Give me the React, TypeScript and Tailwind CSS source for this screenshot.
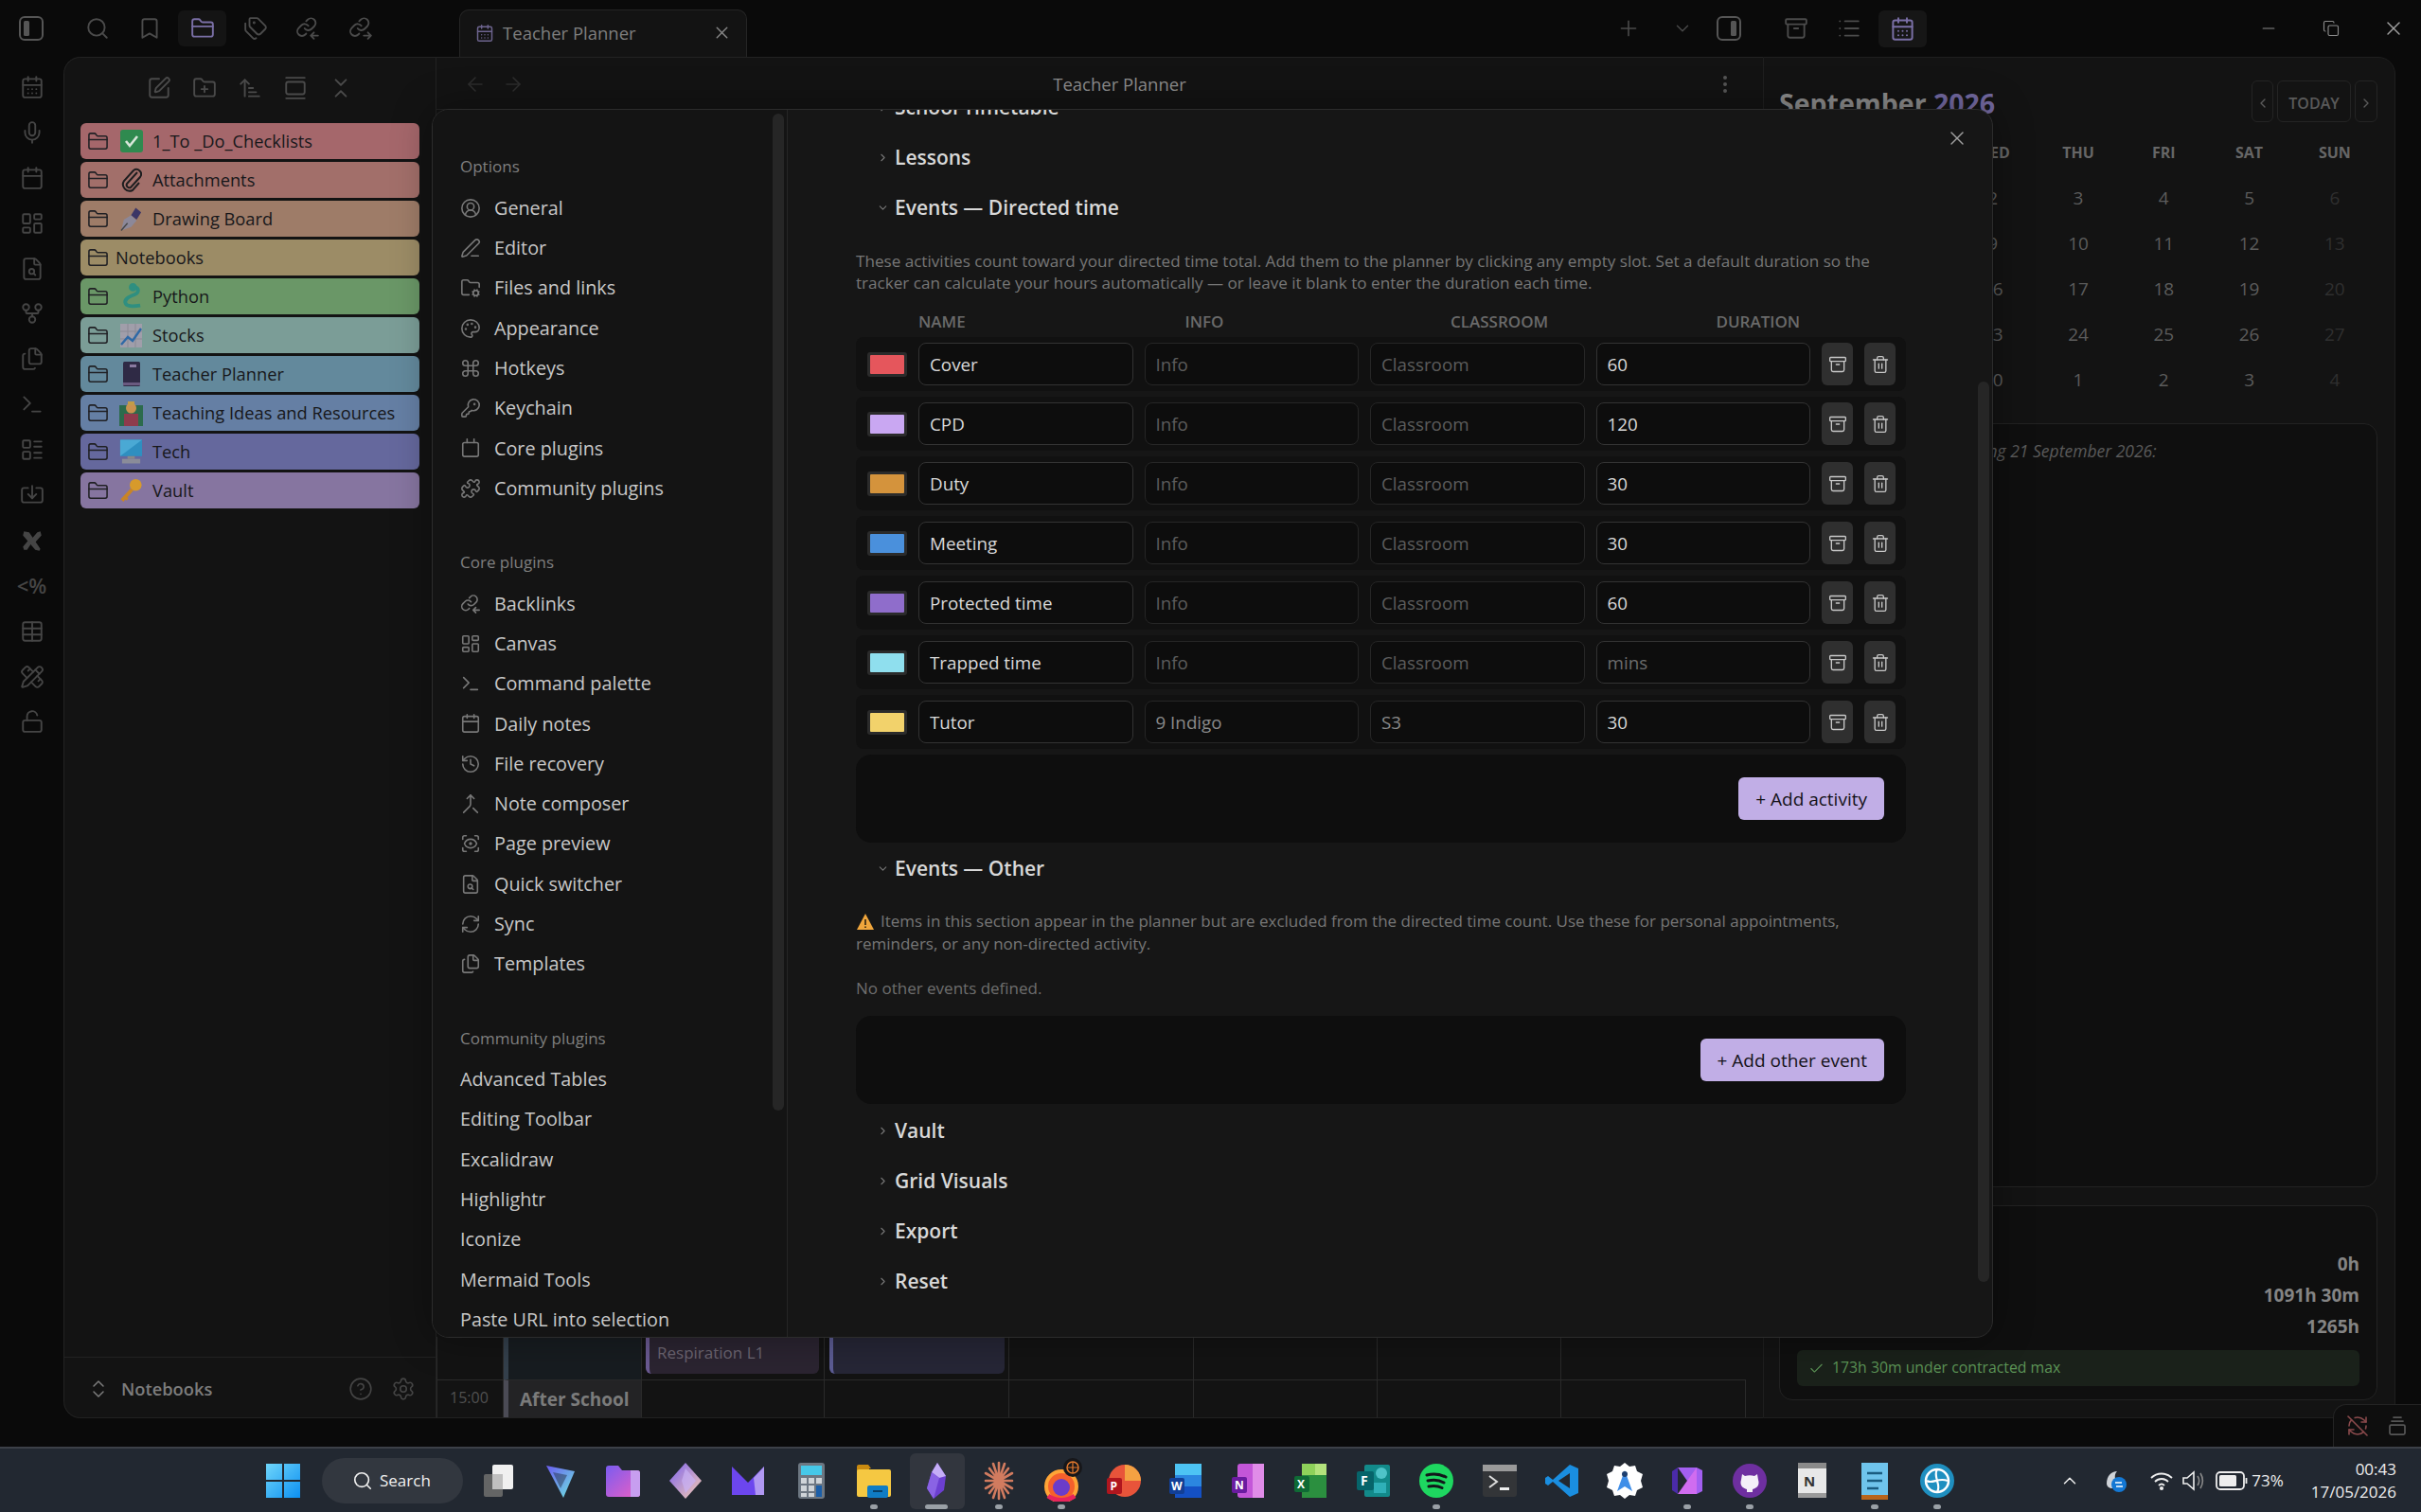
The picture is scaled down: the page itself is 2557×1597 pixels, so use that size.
import React from "react";
import {
  Search, Bookmark, FolderClosed, Tags, X, Plus, ChevronDown, Archive, List, CalendarDays, Minus, Copy,
  SquarePen, FolderPlus, ArrowUpNarrowWide, GalleryVertical, ChevronsDownUp, Mic, Calendar, LayoutDashboard,
  FileSearch, GitFork, Files, Terminal, LayoutList, Import, Table, PencilRuler, LockOpen, ArrowLeft, ArrowRight,
  EllipsisVertical, ChevronRight, CircleUserRound, PenLine, FolderCog, Palette, Command, KeyRound, Puzzle, History,
  Merge, ScanEye, RefreshCw, RefreshCwOff, Trash2, ChevronsUpDown, CircleHelp, Settings, Check, ChevronLeft, ChevronUp,
} from "lucide-react";

const sw = 1.75;

function LinkIn({ size = 26, out = false }: { size?: number; out?: boolean }) {
  return (
    <svg width={size} height={size} viewBox="0 0 24 24" fill="none" stroke="currentColor" strokeWidth={sw} strokeLinecap="round" strokeLinejoin="round">
      <path d="M9 12a4.5 4.5 0 0 0 6.8.5l2.6-2.6a4.5 4.5 0 0 0-6.4-6.4l-1.5 1.5" />
      <path d="M12.6 9.5a4.5 4.5 0 0 0-6.8-.5l-2.6 2.6a4.5 4.5 0 0 0 6.4 6.4l.9-.9" />
      {out ? <path d="M15 19h7M19 16l3 3-3 3" /> : <path d="M22 19h-7M18 16l-3 3 3 3" />}
    </svg>
  );
}
function PanelToggle({ right = false }: { right?: boolean }) {
  return (
    <svg width="30" height="30" viewBox="0 0 30 30" fill="none">
      <rect x="3" y="3" width="24" height="24" rx="5" stroke="currentColor" strokeWidth="2" />
      <rect x={right ? 17 : 7} y="7" width="6" height="16" rx="1.5" fill="currentColor" />
    </svg>
  );
}
function CorePlug({ size = 22 }: { size?: number }) {
  return (
    <svg width={size} height={size} viewBox="0 0 24 24" fill="none" stroke="currentColor" strokeWidth={sw} strokeLinecap="round">
      <rect x="3" y="6" width="18" height="16" rx="2" />
      <path d="M8 2v4M16 2v4" />
    </svg>
  );
}
function ExcaliIcon() {
  return (
    <svg width="26" height="26" viewBox="0 0 24 24" fill="currentColor">
      <path d="M4 3l5 1 11 16-1 2-4-1L3 7z" />
      <path d="M20 3l1 4-8 9-3-4 7-8zM4 21l-1-3 5-6 3 3-4 6z" />
    </svg>
  );
}
function StackIcon() {
  return (
    <svg width="24" height="24" viewBox="0 0 24 24" fill="none" stroke="currentColor" strokeWidth="1.75" strokeLinecap="round">
      <path d="M8 3h8M6 7h12" />
      <rect x="4" y="11" width="16" height="10" rx="1.5" />
    </svg>
  );
}

/* emoji drawings for the folder rows */
const emo: Record<string, React.ReactNode> = {
  check: (<svg width="24" height="26" viewBox="0 0 24 26"><rect x="0" y="1" width="24" height="24" rx="3" fill="#2f8a4f" /><path d="M6 13l4 5 8-10" fill="none" stroke="#d8e6da" strokeWidth="2.6" /></svg>),
  clip: (<svg width="22" height="26" viewBox="0 0 22 26" fill="none" stroke="#1d1d1f" strokeWidth="2"><path d="M17 5L6 17a3 3 0 0 0 4 4L20 10a5 5 0 0 0-7-7L3 14a7 7 0 0 0 9 10l7-8" /></svg>),
  pen: (<svg width="26" height="28" viewBox="0 0 26 28"><path d="M2 27l3-12 8-5 6 6-6 7z" fill="#8c8899" /><path d="M13 10l5-8 6 5-5 8z" fill="#3b3566" /><path d="M2 27l7-8" stroke="#444" strokeWidth="1.4" /></svg>),
  snake: (<svg width="26" height="28" viewBox="0 0 26 28" fill="none" stroke="#2f8f80" strokeWidth="4"><path d="M16 4c6 0 6 6 1 8-8 3-12 6-10 10s10 3 16 2" /><circle cx="15" cy="4" r="2.5" fill="#2f8f80" /></svg>),
  chart: (<svg width="25" height="27" viewBox="0 0 25 27"><rect x="1" y="1" width="23" height="25" fill="#a09eaa" /><path d="M1 9h23M1 17h23M9 1v25M17 1v25" stroke="#8a8994" strokeWidth="1" /><path d="M2 23l7-8 5 4 9-13" fill="none" stroke="#2f69a6" strokeWidth="2.4" /></svg>),
  book: (<svg width="22" height="28" viewBox="0 0 22 28"><rect x="2" y="1" width="18" height="26" rx="1.5" fill="#2f2a45" /><rect x="2" y="23" width="18" height="3" fill="#6a5a80" /><rect x="9" y="4" width="7" height="3" fill="#8a7aa0" /></svg>),
  teach: (<svg width="25" height="28" viewBox="0 0 25 28"><rect x="0" y="6" width="25" height="22" fill="#2c6b4c" /><circle cx="12.5" cy="9" r="5.5" fill="#c9924f" /><rect x="5" y="15" width="15" height="13" fill="#8e3b4c" /><rect x="9" y="2" width="7" height="4" fill="#c29c48" /></svg>),
  tech: (<svg width="26" height="28" viewBox="0 0 26 28"><rect x="1" y="1" width="24" height="18" fill="#2e8fc0" /><path d="M1 1h24L1 19z" fill="#4aa9d4" /><rect x="9" y="19" width="8" height="3" fill="#888" /><rect x="3" y="22" width="20" height="5" fill="#8a8c99" /></svg>),
  key: (<svg width="26" height="28" viewBox="0 0 26 28" fill="none"><circle cx="18" cy="8" r="6.5" fill="#d79a2b" /><path d="M14 13L3 25" stroke="#c98425" strokeWidth="4" /><path d="M6 21l3 3" stroke="#c98425" strokeWidth="3" /></svg>),
};

const folders = [
  { n: "1_To _Do_Checklists", c: "bg-[#a5676b]", e: "check" },
  { n: "Attachments", c: "bg-[#a26f6a]", e: "clip" },
  { n: "Drawing Board", c: "bg-[#9e7c68]", e: "pen" },
  { n: "Notebooks", c: "bg-[#9c8c66]", e: "" },
  { n: "Python", c: "bg-[#6a9767]", e: "snake" },
  { n: "Stocks", c: "bg-[#7b9d97]", e: "chart" },
  { n: "Teacher Planner", c: "bg-[#63899c]", e: "book" },
  { n: "Teaching Ideas and Resources", c: "bg-[#657fa4]", e: "teach" },
  { n: "Tech", c: "bg-[#65689d]", e: "tech" },
  { n: "Vault", c: "bg-[#8675a0]", e: "key" },
];

const ribbon: React.ReactNode[] = [
  <CalendarDays key="a" size={26} strokeWidth={sw} />, <Mic key="b" size={26} strokeWidth={sw} />, <Calendar key="c" size={26} strokeWidth={sw} />,
  <LayoutDashboard key="d" size={26} strokeWidth={sw} />, <FileSearch key="e" size={26} strokeWidth={sw} />, <GitFork key="f" size={26} strokeWidth={sw} />,
  <Files key="g" size={26} strokeWidth={sw} />, <Terminal key="h" size={26} strokeWidth={sw} />, <LayoutList key="i" size={26} strokeWidth={sw} />,
  <Import key="j" size={26} strokeWidth={sw} />, <ExcaliIcon key="k" />, <span key="l" className="text-[22px] font-semibold">&lt;%</span>,
  <Table key="m" size={26} strokeWidth={sw} />, <PencilRuler key="n" size={26} strokeWidth={sw} />, <LockOpen key="o" size={26} strokeWidth={sw} />,
];

const ic = 22;
const options: [React.ReactNode, string][] = [
  [<CircleUserRound size={ic} strokeWidth={sw} />, "General"], [<PenLine size={ic} strokeWidth={sw} />, "Editor"],
  [<FolderCog size={ic} strokeWidth={sw} />, "Files and links"], [<Palette size={ic} strokeWidth={sw} />, "Appearance"],
  [<Command size={ic} strokeWidth={sw} />, "Hotkeys"], [<KeyRound size={ic} strokeWidth={sw} />, "Keychain"],
  [<CorePlug />, "Core plugins"], [<Puzzle size={ic} strokeWidth={sw} />, "Community plugins"],
];
const core: [React.ReactNode, string][] = [
  [<LinkIn size={ic} />, "Backlinks"], [<LayoutDashboard size={ic} strokeWidth={sw} />, "Canvas"],
  [<Terminal size={ic} strokeWidth={sw} />, "Command palette"], [<Calendar size={ic} strokeWidth={sw} />, "Daily notes"],
  [<History size={ic} strokeWidth={sw} />, "File recovery"], [<Merge size={ic} strokeWidth={sw} />, "Note composer"],
  [<ScanEye size={ic} strokeWidth={sw} />, "Page preview"], [<FileSearch size={ic} strokeWidth={sw} />, "Quick switcher"],
  [<RefreshCw size={ic} strokeWidth={sw} />, "Sync"], [<Files size={ic} strokeWidth={sw} />, "Templates"],
];
const community = ["Advanced Tables", "Editing Toolbar", "Excalidraw", "Highlightr", "Iconize", "Mermaid Tools", "Paste URL into selection"];

const rows = [
  { n: "Cover", c: "bg-[#e5565c]", i: "", r: "", d: "60" },
  { n: "CPD", c: "bg-[#c9a7f2]", i: "", r: "", d: "120" },
  { n: "Duty", c: "bg-[#d4933c]", i: "", r: "", d: "30" },
  { n: "Meeting", c: "bg-[#4a90dc]", i: "", r: "", d: "30" },
  { n: "Protected time", c: "bg-[#8f6dcb]", i: "", r: "", d: "60" },
  { n: "Trapped time", c: "bg-[#8fdfee]", i: "", r: "", d: "" },
  { n: "Tutor", c: "bg-[#f2d26b]", i: "9 Indigo", r: "S3", d: "30" },
];

const inputBase = "h-[45px] w-full min-w-0 rounded-[8px] border bg-[#0d0d0d] px-[11px] text-[18.8px] outline-none";

function Head({ t, open = false, mtc = "" }: { t: string; open?: boolean; mtc?: string }) {
  return (
    <div className={"flex h-[53px] items-center pl-[22px] text-[21px] font-semibold text-[#d8d8d8] " + mtc}>
      <span className="flex w-[19px] justify-start text-[#777]">
        {open ? <ChevronDown size={13} strokeWidth={2} /> : <ChevronRight size={13} strokeWidth={2} />}
      </span>
      {t}
    </div>
  );
}

function AddBox({ label, mt }: { label: string; mt: string }) {
  return (
    <div className={"flex h-[93px] items-center justify-end rounded-[16px] bg-[#0e0e0e] pr-[23px] " + mt}>
      <button className="flex h-[45px] items-center rounded-[6px] bg-[#c1aee6] px-[18px] pt-[2px] text-[19px] text-[#141218]">{label}</button>
    </div>
  );
}

function Tray() {
  return (
    <div className="ml-[93px] flex h-full flex-1 items-center text-[#eeeeee]">
      <div className="flex w-[28px] justify-center"><ChevronUp size={22} strokeWidth={1.6} /></div>
      <div className="flex w-[68px] justify-center">
        <svg width="28" height="28" viewBox="0 0 28 28"><path d="M5 17c0-8 5-13 11-13-3 3-3 8 0 12l-5 6c-3 0-6-2-6-5z" fill="#cfd3d8" /><circle cx="18" cy="18" r="8" fill="#1478d4" /><path d="M14 16h7M22 20h-7" stroke="#fff" strokeWidth="1.6" /></svg>
      </div>
      <div className="flex w-[30px] justify-center">
        <svg width="26" height="24" viewBox="0 0 26 24" fill="none" stroke="currentColor" strokeWidth="1.8"><path d="M2 9c6-6 16-6 22 0M6 13c4-4 10-4 14 0M10 17c2-2 4-2 6 0" /><circle cx="13" cy="20" r="1.2" fill="currentColor" /></svg>
      </div>
      <div className="flex w-[38px] justify-center">
        <svg width="28" height="26" viewBox="0 0 28 26" fill="none" stroke="currentColor" strokeWidth="1.6"><path d="M3 10h4l7-6v18l-7-6H3z" /><path d="M18 8c2 3 2 7 0 10M21 5c3 5 3 11 0 16" stroke="#888" /></svg>
      </div>
      <div className="flex w-[42px] justify-center">
        <svg width="34" height="20" viewBox="0 0 34 20" fill="none"><rect x="1" y="1" width="29" height="18" rx="4" stroke="currentColor" strokeWidth="1.8" /><rect x="4" y="4" width="18" height="12" rx="1.5" fill="currentColor" /><path d="M32.5 7v6" stroke="currentColor" strokeWidth="1.8" /></svg>
      </div>
      <span className="text-[17px]">73%</span>
      <div className="ml-auto mr-[26px] flex flex-col items-end gap-[3px] text-[17px] leading-[21px]">
        <span>00:43</span>
        <span>17/05/2026</span>
      </div>
    </div>
  );
}

const tb: { d: React.ReactNode; dot?: string }[] = [
  { d: (<svg width="36" height="38" viewBox="0 0 36 38"><rect x="12" y="2" width="22" height="26" rx="2" fill="#f0f0f0" /><rect x="3" y="12" width="20" height="24" rx="2" fill="#6b6b6b" opacity=".9" /><rect x="12" y="12" width="11" height="16" fill="#c0c0c0" /></svg>) },
  { d: (<svg width="36" height="38" viewBox="0 0 36 38"><defs><linearGradient id="t1" x1="0" y1="0" x2="1" y2="1"><stop offset="0" stopColor="#6a5cf0" /><stop offset="1" stopColor="#6fe8e0" /></linearGradient></defs><path d="M3 3l30 6-12 28z" fill="url(#t1)" /><path d="M10 10l15 3-7 14z" fill="#20273a" opacity=".45" /></svg>) },
  { d: (<svg width="36" height="36" viewBox="0 0 36 36"><defs><linearGradient id="t2" x1="0" y1="0" x2="1" y2="1"><stop offset="0" stopColor="#7a5cf0" /><stop offset="1" stopColor="#ea5fc4" /></linearGradient></defs><path d="M0 5a3 3 0 0 1 3-3h10l4 5h16a3 3 0 0 1 3 3v22a3 3 0 0 1-3 3H3a3 3 0 0 1-3-3z" fill="url(#t2)" /><path d="M26 7h7a3 3 0 0 1 3 3v22a3 3 0 0 1-3 3h-7z" fill="#c79ef0" /></svg>) },
  { d: (<svg width="36" height="40" viewBox="0 0 36 40"><defs><linearGradient id="t3" x1="0" y1="0" x2="1" y2="1"><stop offset="0" stopColor="#7e63ee" /><stop offset="1" stopColor="#f7cdb0" /></linearGradient></defs><path d="M18 1l17 19-17 19L1 20z" fill="url(#t3)" /><path d="M18 7l-4 13 4 13 11-13z" fill="#c9b2f5" opacity=".7" /></svg>) },
  { d: (<svg width="36" height="32" viewBox="0 0 36 32"><path d="M1 1l17 17L35 1v30H1z" fill="#6c46ee" /><path d="M24 13l11-12v30h-9z" fill="#b098f2" /></svg>) },
  { d: (<svg width="30" height="40" viewBox="0 0 30 40"><rect x="1" y="1" width="28" height="38" rx="3" fill="#6d7782" /><rect x="4" y="4" width="22" height="10" fill="#46c8e8" /><g fill="#cfd4d8"><rect x="4" y="17" width="6" height="6" /><rect x="12" y="17" width="6" height="6" /><rect x="20" y="17" width="6" height="6" /><rect x="4" y="25" width="6" height="6" /><rect x="12" y="25" width="6" height="6" /><rect x="4" y="33" width="6" height="4" /><rect x="12" y="33" width="6" height="4" /></g><rect x="20" y="25" width="6" height="12" fill="#1c5fa8" /></svg>) },
  { d: (<svg width="36" height="36" viewBox="0 0 36 36"><path d="M0 3a2 2 0 0 1 2-2h10l3 4h-2v4H0z" fill="#c98a10" /><rect x="0" y="6" width="36" height="29" rx="2" fill="#f5c842" /><rect x="11" y="23" width="22" height="13" rx="2" fill="#0f7cc4" /><rect x="17" y="28" width="10" height="2" fill="#073f66" /></svg>), dot: "w-[8px]" },
  { d: (<svg width="30" height="40" viewBox="0 0 30 40"><path d="M16 1l9 14-2 15-11 9L5 28l5-17z" fill="#6c3fd1" /><path d="M16 1l9 14-7 2-8-6z" fill="#c5aef7" /><path d="M10 11l8 6-6 22-7-11z" fill="#8a63e4" /></svg>), dot: "w-[24px]" },
  { d: (<svg width="32" height="42" viewBox="0 0 32 42" stroke="#d17b5f" strokeWidth="2.6" strokeLinecap="round"><path d="M16 2v38M2 21h28M6 8l20 26M26 8L6 34M10 3l12 36M22 3L10 39M2 13l28 16M30 13L2 29" /></svg>), dot: "w-[8px]" },
  { d: (<div className="relative h-[44px] w-[36px]"><svg width="36" height="36" viewBox="0 0 36 36" className="absolute bottom-0"><circle cx="18" cy="20" r="16" fill="#f5602c" /><circle cx="18" cy="20" r="16" fill="none" stroke="#ffa436" strokeWidth="4" /><circle cx="18" cy="21" r="9" fill="#6b3cc9" /><path d="M4 30c8 6 20 6 28 0" stroke="#e8245c" strokeWidth="5" fill="none" /></svg><svg width="20" height="20" viewBox="0 0 20 20" className="absolute right-[-4px] top-[-2px]"><circle cx="10" cy="10" r="10" fill="#17171a" /><circle cx="10" cy="10" r="6" fill="none" stroke="#e2792d" strokeWidth="1.5" /><path d="M10 4v12M4 10h12" stroke="#e2792d" strokeWidth="1.2" /></svg></div>), dot: "w-[8px]" },
  { d: (<svg width="36" height="40" viewBox="0 0 36 40"><circle cx="19" cy="20" r="17" fill="#e8543a" /><path d="M19 3a17 17 0 0 1 17 17H19z" fill="#f4a142" /><rect x="0" y="17" width="16" height="17" rx="2" fill="#b0161e" /><text x="3.5" y="30" fontSize="12" fontWeight="700" fill="#fff" fontFamily="Open Sans">P</text></svg>) },
  { d: (<svg width="36" height="38" viewBox="0 0 36 38"><rect x="6" y="1" width="28" height="12" fill="#4dc4f4" /><rect x="6" y="13" width="28" height="12" fill="#2b86e0" /><rect x="6" y="25" width="28" height="12" fill="#1450c4" /><rect x="0" y="16" width="16" height="17" rx="2" fill="#123f96" /><text x="2" y="29" fontSize="12" fontWeight="700" fill="#fff" fontFamily="Open Sans">W</text></svg>) },
  { d: (<svg width="36" height="38" viewBox="0 0 36 38"><rect x="6" y="1" width="28" height="36" rx="3" fill="#c356d8" /><rect x="22" y="1" width="12" height="36" fill="#e08ce8" /><rect x="0" y="15" width="16" height="17" rx="2" fill="#6a1ba0" /><text x="3" y="28" fontSize="12" fontWeight="700" fill="#fff" fontFamily="Open Sans">N</text></svg>) },
  { d: (<svg width="36" height="38" viewBox="0 0 36 38"><rect x="8" y="1" width="26" height="12" fill="#8ed15a" /><rect x="8" y="13" width="26" height="24" fill="#2b8f3f" /><rect x="22" y="1" width="12" height="12" fill="#b3e27c" /><rect x="0" y="14" width="16" height="17" rx="2" fill="#0f6a35" /><text x="3" y="27" fontSize="12" fontWeight="700" fill="#fff" fontFamily="Open Sans">X</text></svg>) },
  { d: (<svg width="36" height="36" viewBox="0 0 36 36"><rect x="8" y="1" width="27" height="34" rx="2" fill="#128a8a" /><circle cx="26" cy="10" r="6" fill="#4fc3c8" /><rect x="18" y="20" width="13" height="11" fill="#2fb0b8" /><rect x="0" y="8" width="18" height="20" rx="2" fill="#06646a" /><text x="4" y="23" fontSize="14" fontWeight="700" fill="#fff" fontFamily="Open Sans">F</text></svg>) },
  { d: (<svg width="38" height="38" viewBox="0 0 38 38"><circle cx="19" cy="19" r="18" fill="#1ed760" /><path d="M9 13c7-2 14-1 20 2M10 19c6-1.5 12-1 17 2M11 25c5-1 10-.5 14 1.5" fill="none" stroke="#12161a" strokeWidth="3" strokeLinecap="round" /></svg>), dot: "w-[8px]" },
  { d: (<svg width="36" height="34" viewBox="0 0 36 34"><rect x="0" y="0" width="36" height="34" rx="3" fill="#333538" /><rect x="0" y="0" width="36" height="7" fill="#9a9a9a" /><path d="M7 12l8 6-8 6" fill="none" stroke="#ddd" strokeWidth="2" /><rect x="18" y="24" width="10" height="3" fill="#eee" /></svg>) },
  { d: (<svg width="36" height="36" viewBox="0 0 36 36"><path d="M26 1l9 4v26l-9 4L8 19l-5 4-3-2V15l3-2 5 4zM26 10L14 18l12 8z" fill="#1a8ee0" /></svg>) },
  { d: (<svg width="38" height="38" viewBox="0 0 38 38"><path d="M19 0l5 4 6-1 2 6 6 3-2 7 2 7-6 3-2 6-6-1-5 4-5-4-6 1-2-6-6-3 2-7-2-7 6-3 2-6 6 1z" fill="#fff" /><path d="M19 8l8 22-8-5-8 5z" fill="#3e8ee8" /><circle cx="19" cy="12" r="3" fill="#1c3f70" /></svg>) },
  { d: (<svg width="36" height="36" viewBox="0 0 36 36"><path d="M8 4l20 28 6-3V7l-6-3z" fill="#a35ff0" /><path d="M8 4L2 8v20l6 4z" fill="#4a2ba8" /><path d="M8 32L28 4v28z" fill="#d06cf0" /></svg>), dot: "w-[8px]" },
  { d: (<svg width="38" height="38" viewBox="0 0 38 38"><circle cx="19" cy="19" r="18" fill="#6e2fa0" /><path d="M11 12l3 2c3-1 7-1 10 0l3-2 1 6c2 6-2 9-6 10v3h-6v-3c-4-1-8-4-6-10z" fill="#f4f0f8" /></svg>), dot: "w-[8px]" },
  { d: (<svg width="32" height="38" viewBox="0 0 32 38"><rect x="1" y="3" width="30" height="34" rx="1" fill="#e8e8e8" /><rect x="1" y="0" width="30" height="6" fill="#8a8a8a" /><rect x="1" y="32" width="30" height="5" fill="#9a9a9a" /><text x="7" y="25" fontSize="15" fontWeight="700" fill="#333" fontFamily="Open Sans">N</text></svg>) },
  { d: (<svg width="30" height="40" viewBox="0 0 30 40"><rect x="1" y="1" width="28" height="34" fill="#6fc4ec" /><rect x="1" y="35" width="28" height="5" fill="#b8651c" /><path d="M7 12h16M7 20h16M7 28h12" stroke="#1a5c80" strokeWidth="2.4" /></svg>), dot: "w-[8px]" },
  { d: (<svg width="38" height="38" viewBox="0 0 38 38"><circle cx="19" cy="19" r="18" fill="#1f8fc0" /><circle cx="19" cy="19" r="12" fill="none" stroke="#fff" strokeWidth="2.5" /><path d="M8 19c6 4 12-4 22 0M19 7c-5 8 5 16 0 24" fill="none" stroke="#fff" strokeWidth="2.2" /></svg>), dot: "w-[8px]" },
];

export default function App() {
  const days = ["MON", "TUE", "WED", "THU", "FRI", "SAT", "SUN"];
  const dates = [31, 1, 2, 3, 4, 5, 6, 7, 8, 9, 10, 11, 12, 13, 14, 15, 16, 17, 18, 19, 20, 21, 22, 23, 24, 25, 26, 27, 28, 29, 30, 1, 2, 3, 4];
  return (
    <div className="relative flex h-[1597px] w-[2557px] flex-col overflow-hidden bg-[#0a0a0a] font-['Open_Sans','Noto_Sans',sans-serif]">
      {/* title bar */}
      <div className="flex h-[60px] shrink-0 items-center text-[#4b4b4b]">
        <div className="flex w-[66px] justify-center text-[#555]"><PanelToggle /></div>
        <div className="ml-[9px] flex">
          {[<Search key="a" size={26} strokeWidth={sw} />, <Bookmark key="b" size={26} strokeWidth={sw} />].map((x) => (
            <div key={x.key} className="flex h-[38px] w-[55.6px] items-center justify-center">{x}</div>
          ))}
          <div className="mx-[2.3px] flex h-[38px] w-[51px] items-center justify-center rounded-[6px] bg-[#141414] text-[#7a6fa6]"><FolderClosed size={26} strokeWidth={sw} /></div>
          {[<Tags key="c" size={26} strokeWidth={sw} />, <LinkIn key="d" />, <LinkIn key="e" out />].map((x) => (
            <div key={x.key} className="flex h-[38px] w-[55.6px] items-center justify-center">{x}</div>
          ))}
        </div>
        <div className="ml-[76.5px] flex h-[50px] w-[304px] items-center self-end rounded-t-[10px] border border-b-0 border-[#252525] bg-[#131313] pb-[2px] pl-[16px] pr-[15px] text-[#7f7f7f]">
          <span className="text-[#6e6590]"><CalendarDays size={20} strokeWidth={sw} /></span>
          <span className="ml-[9px] text-[18.5px]">Teacher Planner</span>
          <span className="ml-auto text-[#888]"><X size={21} strokeWidth={1.6} /></span>
        </div>
        <div className="ml-auto flex items-center">
          <div className="flex w-[40px] justify-center"><Plus size={26} strokeWidth={1.5} /></div>
          <div className="ml-[17px] flex w-[40px] justify-center"><ChevronDown size={22} strokeWidth={1.5} /></div>
          <div className="ml-[9px] flex w-[40px] justify-center text-[#555]"><PanelToggle right /></div>
          <div className="ml-[31px] flex w-[40px] justify-center"><Archive size={26} strokeWidth={sw} /></div>
          <div className="ml-[16px] flex w-[40px] justify-center"><List size={26} strokeWidth={sw} /></div>
          <div className="ml-[11px] flex h-[39px] w-[51px] items-center justify-center rounded-[6px] bg-[#161616] text-[#7a6fa6]"><CalendarDays size={27} strokeWidth={sw} /></div>
          <div className="ml-[341px] flex w-[40px] justify-center text-[#8a8a8a]"><Minus size={20} strokeWidth={1.4} /></div>
          <div className="ml-[26px] flex w-[40px] justify-center text-[#8a8a8a]"><Copy size={18} strokeWidth={1.5} /></div>
          <div className="ml-[26px] mr-[9px] flex w-[40px] justify-center text-[#a0a0a0]"><X size={24} strokeWidth={1.4} /></div>
        </div>
      </div>

      {/* workspace */}
      <div className="flex min-h-0 flex-1 pb-[30px] pr-[27px]">
        <div className="flex w-[67px] shrink-0 flex-col items-center pt-[8px] text-[#454545]">
          {ribbon.map((r, i) => (<div key={i} className="flex h-[47.9px] items-center justify-center">{r}</div>))}
        </div>

        <div className="flex w-[393px] shrink-0 flex-col rounded-l-[18px] border border-r-0 border-[#222] bg-[#131313]">
          <div className="flex h-[62px] items-center justify-center gap-[22px] pt-[2px] text-[#4a4a4a]">
            <SquarePen size={26} strokeWidth={sw} /><FolderPlus size={26} strokeWidth={sw} /><ArrowUpNarrowWide size={26} strokeWidth={sw} /><GalleryVertical size={26} strokeWidth={sw} /><ChevronsDownUp size={26} strokeWidth={sw} />
          </div>
          <div className="mt-[7px] flex flex-col gap-[3px] pl-[17px] pr-[17px]">
            {folders.map((f) => (
              <div key={f.n} className={"flex h-[38px] items-center rounded-[6px] pl-[7px] text-[18.3px] text-[#17171a] " + f.c}>
                <FolderClosed size={23} strokeWidth={1.6} className="text-[#202024]" />
                {f.e && <span className="ml-[11px] mr-[10px] flex w-[25px] justify-center">{emo[f.e]}</span>}
                <span className={f.e ? "" : "ml-[7px]"}>{f.n}</span>
              </div>
            ))}
          </div>
          <div className="mt-auto flex h-[64px] items-center border-t border-[#222] pl-[24px] pt-[2px] text-[#7c7c7c]">
            <ChevronsUpDown size={24} strokeWidth={1.5} />
            <span className="ml-[12px] text-[18.3px] font-semibold">Notebooks</span>
            <span className="ml-auto text-[#444]"><CircleHelp size={26} strokeWidth={1.5} /></span>
            <span className="ml-[19px] mr-[21px] text-[#444]"><Settings size={26} strokeWidth={1.5} /></span>
          </div>
        </div>

        <div className="flex min-w-0 flex-1 flex-col border-y border-l border-[#222] bg-[#131313]">
          <div className="relative flex h-[55px] items-center justify-center border-b border-[#222] pl-[42px] pt-[2px] text-[18.5px] text-[#8c8c8c]">
            <div className="absolute left-[29px] flex gap-[16px] text-[#2e2e2e]"><ArrowLeft size={24} strokeWidth={1.5} /><ArrowRight size={24} strokeWidth={1.5} /></div>
            Teacher Planner
            <span className="absolute right-[28px] text-[#555]"><EllipsisVertical size={24} strokeWidth={2} /></span>
          </div>
          <div className="mt-auto grid grid-cols-[71px_145px_193px_195px_195px_194px_194px_196px] pr-[19px]">
            <div className="h-[45px] border-x border-[#2a2a2a]" />
            <div className="h-[45px] border-l-[5px] border-[#34404c] bg-[#171c20]" />
            <div className="h-[45px] border-l border-[#2a2a2a] pb-[6px] pl-[4px] pr-[5px]">
              <div className="flex h-full items-end rounded-b-[6px] border-l-[4px] border-[#6b5a92] bg-[#2b2431] pb-[10px] pl-[8px] text-[17px] text-[#6d6672]">Respiration L1</div>
            </div>
            <div className="h-[45px] border-l border-[#2a2a2a] pb-[6px] pl-[5px] pr-[4px]">
              <div className="h-full rounded-b-[6px] border-l-[4px] border-[#5c5c94] bg-[#262636]" />
            </div>
            {[0, 1, 2, 3].map((i) => (<div key={i} className="h-[45px] border-l border-[#2a2a2a] last:border-r" />))}
            <div className="h-[40px] overflow-hidden border-x border-t border-[#2a2a2a] pl-[13px] pt-[6px] text-[16px] text-[#505050]">15:00</div>
            <div className="h-[40px] overflow-hidden border-l-[5px] border-t border-t-[#2a2a2a] border-l-[#4b4b55] bg-[#232325] pl-[12px] pt-[7px]">
              <div className="text-[19px] font-bold leading-[26px] text-[#7b7b7b]">After School</div>
              <div className="text-[15px] leading-[20px] text-[#5b5b5b]">15:00 – 16:45</div>
            </div>
            {[0, 1, 2, 3, 4, 5].map((i) => (<div key={i} className="h-[40px] border-l border-t border-[#2a2a2a] last:border-r" />))}
          </div>
        </div>

        <div className="flex w-[668px] shrink-0 flex-col rounded-tr-[18px] border-y border-r border-l border-[#1f1f1f] bg-[#131313] pl-[16px] pr-[18px] pt-[24px]">
          <div className="flex h-[44px] items-start">
            <div className="mt-[2px] text-[28.5px] font-bold leading-[44px] text-[#8a8a8a]">September <span className="text-[#7268a0]">2026</span></div>
            <div className="ml-auto flex gap-[4px] text-[#5a5a5a]">
              <div className="flex h-[44px] w-[23px] items-center justify-center rounded-[6px] border border-[#242424] pt-[4px]"><ChevronLeft size={16} /></div>
              <div className="flex h-[44px] w-[78px] items-center justify-center rounded-[6px] border border-[#242424] pt-[3px] text-[16px] font-semibold">TODAY</div>
              <div className="flex h-[44px] w-[24px] items-center justify-center rounded-[6px] border border-[#242424] pt-[4px]"><ChevronRight size={16} /></div>
            </div>
          </div>
          <div className="mt-[8px] grid grid-cols-7">
            {days.map((d) => (<div key={d} className="flex h-[48px] items-center justify-center text-[16px] font-bold text-[#666]">{d}</div>))}
            {dates.map((d, i) => (<div key={i} className={"flex h-[48px] items-center justify-center text-[19px] " + (i % 7 === 6 ? "text-[#2f2f2f]" : "text-[#5c5c5c]")}>{d}</div>))}
          </div>
          <div className="mt-[22px] h-[807px] rounded-[14px] border border-[#222] bg-[#0f0f0f] pl-[44px] pr-[19px] pt-[15px] text-[17.5px] italic leading-[26px] text-[#5a5a5a]">Notes for week beginning 21 September 2026:</div>
          <div className="mt-[19px] flex h-[206px] flex-col justify-end rounded-[14px] border border-[#222] bg-[#0f0f0f] px-[18px] pb-[14px]">
            <div className="flex flex-col items-end text-[19px] font-bold leading-[33px] text-[#848484]"><span>0h</span><span>1091h 30m</span><span>1265h</span></div>
            <div className="mt-[8px] flex h-[38px] items-center rounded-[6px] bg-[#1a211a] pl-[12px] text-[15.8px] text-[#5c9456]">
              <Check size={17} strokeWidth={1.5} /><span className="ml-[8px]">173h 30m under contracted max</span>
            </div>
          </div>
        </div>
      </div>

      {/* taskbar */}
      <div className="flex h-[69px] shrink-0 items-center border-t-2 border-[#3c4048] bg-[#222831] pl-[281px]">
        <svg width="36" height="36" viewBox="0 0 36 36"><defs><linearGradient id="win" x1="0" y1="0" x2="1" y2="1"><stop offset="0" stopColor="#6fd6fb" /><stop offset="1" stopColor="#0c8ff0" /></linearGradient></defs><path d="M0 0h17v17H0zM19 0h17v17H19zM0 19h17v17H0zM19 19h17v17H19z" fill="url(#win)" /></svg>
        <div className="ml-[23px] flex h-[48px] w-[149px] items-center rounded-full bg-[#32373f] pl-[32px] text-[#f0f0f0]">
          <Search size={22} strokeWidth={1.8} /><span className="ml-[7px] text-[17px]">Search</span>
        </div>
        <div className="ml-[4px] flex h-full">
          {tb.map((t, i) => (
            <div key={i} className="relative flex h-full w-[66.1px] items-center justify-center">
              {i === 7 && <div className="absolute left-[5px] top-[5px] h-[59px] w-[58px] rounded-[6px] bg-[#32363e]" />}
              <div className="relative">{t.d}</div>
              {t.dot && <div className={"absolute bottom-[3px] h-[5px] rounded-full bg-[#9aa0a6] " + t.dot} />}
            </div>
          ))}
        </div>
        <Tray />
      </div>

      {/* settings modal */}
      <div className="absolute left-[456px] top-[115px] flex h-[1298px] w-[1649px] overflow-hidden rounded-[18px] border border-[#2c2c2c] bg-[#161616] shadow-[0_0_40px_rgba(0,0,0,0.35)]">
        <div className="relative w-[375px] shrink-0 overflow-hidden border-r border-[#262626] bg-[#141414] pl-[29px] pt-[46px]">
          <div className="flex h-[28px] items-center text-[17px] font-medium text-[#7f7f7f]">Options</div>
          <div className="mt-[8.5px]">
            {options.map(([i, t]) => (
              <div key={t} className="flex h-[42.3px] items-center text-[19.8px] text-[#c8c8c8]"><span className="flex w-[36px] text-[#777]">{i}</span>{t}</div>
            ))}
          </div>
          <div className="mt-[43px] flex h-[28px] items-center text-[17px] font-medium text-[#7f7f7f]">Core plugins</div>
          <div className="mt-[8.5px]">
            {core.map(([i, t]) => (
              <div key={t} className="flex h-[42.3px] items-center text-[19.8px] text-[#c8c8c8]"><span className="flex w-[36px] text-[#777]">{i}</span>{t}</div>
            ))}
          </div>
          <div className="mt-[43px] flex h-[28px] items-center text-[17px] font-medium text-[#7f7f7f]">Community plugins</div>
          <div className="mt-[8.5px]">
            {community.map((t) => (<div key={t} className="flex h-[42.3px] items-center text-[19.8px] text-[#c8c8c8]">{t}</div>))}
          </div>
          <div className="absolute right-[3px] top-[4px] h-[1053px] w-[12px] rounded-full bg-[#262626]" />
        </div>

        <div className="relative min-w-0 flex-1 overflow-hidden pl-[72px] pr-[91px]">
          <div className="mt-[-29px]">
            <Head t="School Timetable" />
            <Head t="Lessons" />
            <Head t="Events — Directed time" open />
          </div>
          <div className="mt-[18px] text-[17.1px] leading-[23px] text-[#767676]">
            <div className="whitespace-nowrap">These activities count toward your directed time total. Add them to the planner by clicking any empty slot. Set a default duration so the</div>
            <div className="whitespace-nowrap">tracker can calculate your hours automatically — or leave it blank to enter the duration each time.</div>
          </div>
          <div className="mt-[17px] grid h-[18px] grid-cols-[42px_1fr_1fr_1fr_1fr_78px] items-center gap-[12px] pl-[12px] pr-[11px] text-[17px] font-semibold uppercase text-[#6a6a6a]">
            <span />
            <span>Name</span>
            <span className="ml-[43px]">Info</span>
            <span className="ml-[85px]">Classroom</span>
            <span className="ml-[127px]">Duration</span>
          </div>
          <div className="mt-[11px] flex flex-col gap-[6px]">
            {rows.map((r) => (
              <div key={r.n} className="grid h-[57px] grid-cols-[42px_1fr_1fr_1fr_1fr_33px_33px] items-center gap-[12px] rounded-[8px] bg-[#111111] pl-[12px] pr-[11px]">
                <div className="h-[26px] rounded-[3px] bg-[#2b2b2b] p-[3px]"><div className={"h-full rounded-[1px] " + r.c} /></div>
                <input readOnly value={r.n} className={inputBase + " border-[#333] text-[#d9d9d9]"} />
                <input readOnly value={r.i} placeholder="Info" className={inputBase + " border-[#262626] text-[#8a8a8a] placeholder:text-[#5c5c5c]"} />
                <input readOnly value={r.r} placeholder="Classroom" className={inputBase + " border-[#262626] text-[#8a8a8a] placeholder:text-[#5c5c5c]"} />
                <input readOnly value={r.d} placeholder="mins" className={inputBase + " border-[#333] text-[#d9d9d9] placeholder:text-[#6c6c6c]"} />
                <div className="flex h-[45px] items-center justify-center rounded-[6px] bg-[#2f2f2f] text-[#c8c8c8]"><Archive size={20} strokeWidth={1.6} /></div>
                <div className="flex h-[45px] items-center justify-center rounded-[6px] bg-[#2f2f2f] text-[#c8c8c8]"><Trash2 size={20} strokeWidth={1.6} /></div>
              </div>
            ))}
          </div>
          <AddBox label="+ Add activity" mt="mt-[6px]" />
          <Head t="Events — Other" open mtc="mt-[1px]" />
          <div className="mt-[17px] text-[17px] leading-[24px] text-[#767676]">
            <div className="flex items-center whitespace-nowrap">
              <svg width="20" height="19" viewBox="0 0 20 19" className="mr-[6px]"><path d="M10 1l9 17H1z" fill="#f0a63c" /><path d="M10 7v6M10 14.5v1.6" stroke="#3a2a10" strokeWidth="1.7" /></svg>
              Items in this section appear in the planner but are excluded from the directed time count. Use these for personal appointments,
            </div>
            <div>reminders, or any non-directed activity.</div>
          </div>
          <div className="mt-[23px] text-[17px] leading-[24px] text-[#6e6e6e]">No other events defined.</div>
          <AddBox label="+ Add other event" mt="mt-[17px]" />
          <div className="mt-[2px]">
            <Head t="Vault" /><Head t="Grid Visuals" /><Head t="Export" /><Head t="Reset" />
          </div>
          <div className="absolute right-[3px] top-[287px] h-[951px] w-[12px] rounded-full bg-[#262626]" />
        </div>
        <div className="absolute right-[25px] top-[18px] text-[#a0a0a0]"><X size={24} strokeWidth={1.4} /></div>
      </div>

      {/* status bar corner */}
      <div className="absolute left-[2464px] top-[1483px] flex h-[45px] w-[93px] items-center rounded-tl-[14px] border-l border-t border-[#242424] bg-[#0e0e0e] pl-[13px]">
        <span className="text-[#8a4a4c]"><RefreshCwOff size={24} strokeWidth={1.6} /></span>
        <span className="ml-[18px] text-[#555]"><StackIcon /></span>
      </div>
    </div>
  );
}
